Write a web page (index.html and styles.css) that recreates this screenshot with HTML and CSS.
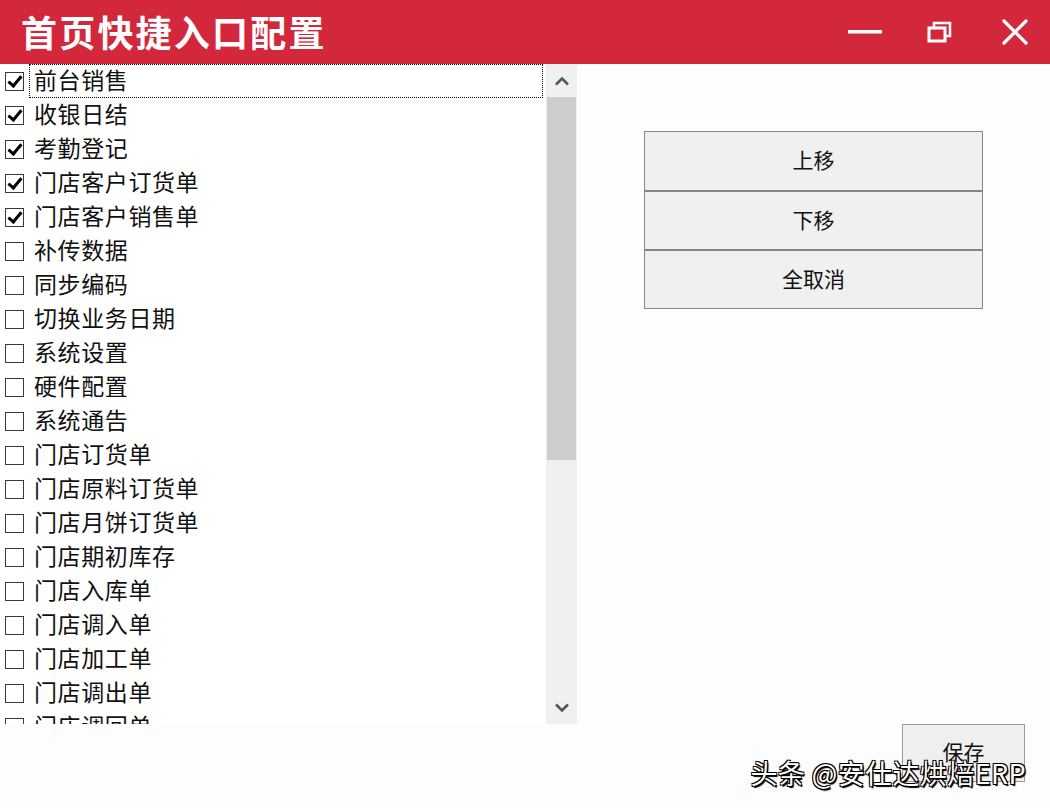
FILE: index.html
```html
<!DOCTYPE html>
<html lang="zh">
<head>
<meta charset="utf-8">
<title>首页快捷入口配置</title>
<link rel="stylesheet" href="styles.css">
</head>
<body>
<div class="window">
  <header class="titlebar">
    <h1 class="title">首页快捷入口配置</h1>
    <div class="controls">
      <span class="ctl">
        <svg width="34" height="4" viewBox="0 0 34 4"><rect x="0" y="0" width="34" height="3.5" fill="#fff"/></svg>
      </span>
      <span class="ctl">
        <svg width="26" height="24" viewBox="0 0 26 24"><rect x="2" y="8" width="16" height="13" fill="none" stroke="#fff" stroke-width="3"/><path d="M7 7.5V3h16v13h-4.5" fill="none" stroke="#fff" stroke-width="2.5"/></svg>
      </span>
      <span class="ctl">
        <svg width="26" height="26" viewBox="0 0 26 26"><path d="M2 2L24 24M24 2L2 24" stroke="#fff" stroke-width="3.2" stroke-linecap="round"/></svg>
      </span>
    </div>
  </header>
  <main class="content">
    <div class="listbox">
      <ul class="list">
        <li class="item focused"><span class="box checked"></span><span class="label">前台销售</span></li>
        <li class="item"><span class="box checked"></span><span class="label">收银日结</span></li>
        <li class="item"><span class="box checked"></span><span class="label">考勤登记</span></li>
        <li class="item"><span class="box checked"></span><span class="label">门店客户订货单</span></li>
        <li class="item"><span class="box checked"></span><span class="label">门店客户销售单</span></li>
        <li class="item"><span class="box"></span><span class="label">补传数据</span></li>
        <li class="item"><span class="box"></span><span class="label">同步编码</span></li>
        <li class="item"><span class="box"></span><span class="label">切换业务日期</span></li>
        <li class="item"><span class="box"></span><span class="label">系统设置</span></li>
        <li class="item"><span class="box"></span><span class="label">硬件配置</span></li>
        <li class="item"><span class="box"></span><span class="label">系统通告</span></li>
        <li class="item"><span class="box"></span><span class="label">门店订货单</span></li>
        <li class="item"><span class="box"></span><span class="label">门店原料订货单</span></li>
        <li class="item"><span class="box"></span><span class="label">门店月饼订货单</span></li>
        <li class="item"><span class="box"></span><span class="label">门店期初库存</span></li>
        <li class="item"><span class="box"></span><span class="label">门店入库单</span></li>
        <li class="item"><span class="box"></span><span class="label">门店调入单</span></li>
        <li class="item"><span class="box"></span><span class="label">门店加工单</span></li>
        <li class="item"><span class="box"></span><span class="label">门店调出单</span></li>
        <li class="item"><span class="box"></span><span class="label">门店调回单</span></li>
      </ul>
      <div class="scrollbar">
        <div class="arrow">
          <svg width="16" height="10" viewBox="0 0 16 10"><path d="M2 8.5L8 2.5L14 8.5" fill="none" stroke="#555" stroke-width="2.6"/></svg>
        </div>
        <div class="thumb"></div>
        <div class="track"></div>
        <div class="arrow">
          <svg width="16" height="10" viewBox="0 0 16 10"><path d="M2 1.5L8 7.5L14 1.5" fill="none" stroke="#555" stroke-width="2.6"/></svg>
        </div>
      </div>
    </div>
    <aside class="side">
      <div class="btngroup">
        <button class="btn">上移</button>
        <button class="btn">下移</button>
        <button class="btn">全取消</button>
      </div>
      <button class="btn save">保存</button>
    </aside>
    <div class="watermark">头条 @安仕达烘焙ERP</div>
  </main>
</div>
</body>
</html>
```
FILE: styles.css
```css
* { box-sizing: border-box; }
html, body { margin: 0; padding: 0; }
body {
  width: 1050px;
  height: 808px;
  overflow: hidden;
  background: #fdfdfd;
  font-family: "Noto Sans CJK SC", "Noto Sans", sans-serif;
  color: #111;
}
.window { display: flex; flex-direction: column; height: 808px; }
.titlebar {
  height: 64px;
  background: #d3283c;
  display: flex;
  align-items: center;
  justify-content: space-between;
  flex: none;
}
.title {
  margin: 0 0 2px 21px;
  font-size: 36px;
  font-weight: 700;
  letter-spacing: 2.2px;
  color: #fff;
  line-height: 1;
}
.controls { display: flex; align-items: center; margin-right: 13px; }
.ctl { display: flex; align-items: center; justify-content: center; width: 44px; height: 40px; margin-left: 31px; }
.ctl:first-child { margin-left: 0; }
.content { flex: 1; display: flex; position: relative; }
.listbox { display: flex; height: 660px; flex: none; }
.list {
  list-style: none;
  margin: 0;
  padding: 0;
  width: 546px;
  height: 660px;
  overflow: hidden;
  background: #fff;
}
.item {
  height: 34px;
  display: flex;
  align-items: center;
  font-size: 23px;
  letter-spacing: 0.6px;
  line-height: 1;
}
.box {
  width: 19px;
  height: 19px;
  border: 1px solid #3a3a3a;
  margin-left: 5px;
  margin-right: 10px;
  flex: none;
  background: #fff;
  position: relative;
}
.box.checked::after {
  content: "";
  position: absolute;
  left: 5px;
  top: 0px;
  width: 5px;
  height: 11px;
  border-right: 3px solid #000;
  border-bottom: 3px solid #000;
  transform: rotate(40deg);
}
.label { color: #111; padding-bottom: 4px; }
.item.focused .label {
  flex: 1;
  margin-left: -5px;
  padding-left: 4px;
  height: 34px;
  display: flex;
  align-items: center;
  border: 1px dotted #000;
  margin-right: 3px;
}
.scrollbar {
  width: 31px;
  height: 660px;
  display: flex;
  flex-direction: column;
  background: #f0f0f0;
}
.arrow { height: 33px; display: flex; align-items: center; justify-content: center; flex: none; }
.thumb { height: 363px; background: #cdcdcd; margin: 0 1px; flex: none; }
.track { flex: 1; }
.side {
  flex: 1;
  display: flex;
  flex-direction: column;
  padding: 67px 25px 26px 67px;
}
.btngroup { display: flex; flex-direction: column; width: 339px; }
.btn {
  font-family: "Noto Sans CJK SC", "Noto Sans", sans-serif;
  font-size: 21px;
  color: #111;
  background: #f0f0f0;
  border: 1px solid #848a92;
  height: 60px;
  padding: 0 0 4px;
  margin: 0;
}
.btngroup .btn + .btn { margin-top: -1px; border-top: 2px solid #7d858d; }
.save {
  margin-top: auto;
  align-self: flex-end;
  width: 123px;
  height: 58px;
  background: #efefef;
  border: 1px solid #9a9a9a;
}
.watermark {
  position: absolute;
  right: 24px;
  bottom: 22px;
  font-size: 27px;
  color: #fff;
  letter-spacing: 0.4px;
  line-height: 1;
  text-shadow: 1px 1px 0 #000, -1px 1px 0 #000, 1px -1px 0 #000, -1px -1px 0 #000, 1.5px 1.5px 1px #000;
}
```
